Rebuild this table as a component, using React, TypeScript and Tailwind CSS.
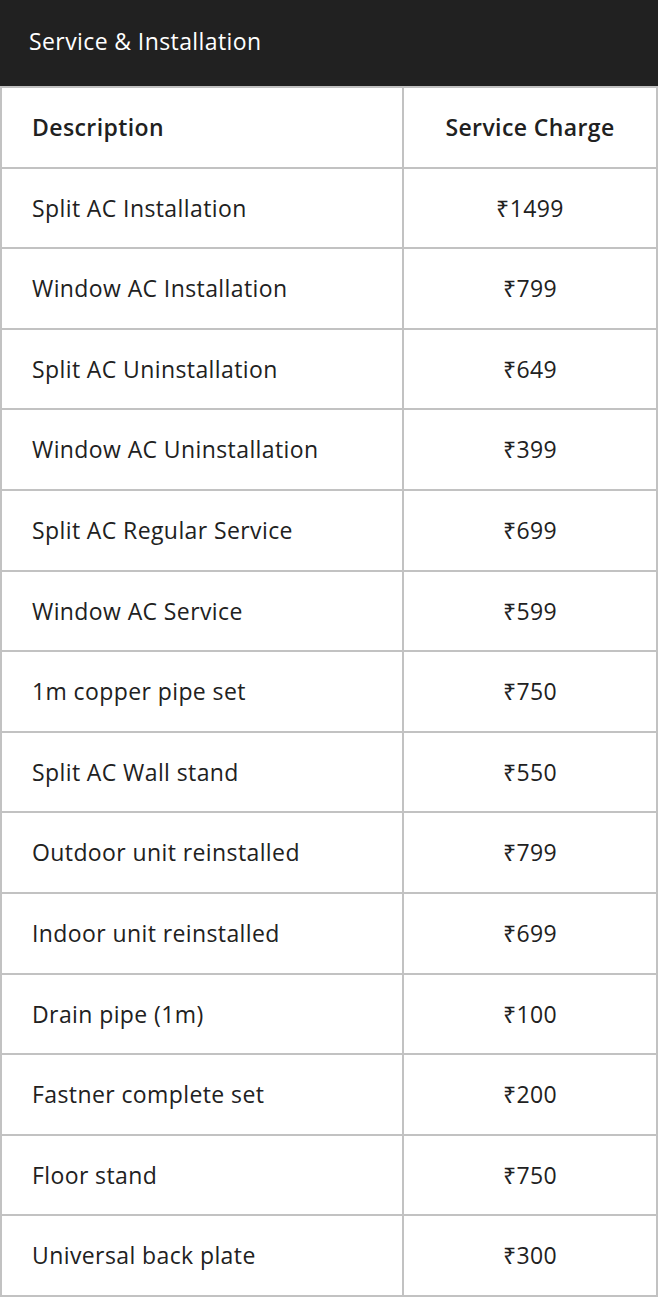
import React from "react";

const rows: [string, string][] = [
  ["Split AC Installation", "₹1499"],
  ["Window AC Installation", "₹799"],
  ["Split AC Uninstallation", "₹649"],
  ["Window AC Uninstallation", "₹399"],
  ["Split AC Regular Service", "₹699"],
  ["Window AC Service", "₹599"],
  ["1m copper pipe set", "₹750"],
  ["Split AC Wall stand", "₹550"],
  ["Outdoor unit reinstalled", "₹799"],
  ["Indoor unit reinstalled", "₹699"],
  ["Drain pipe (1m)", "₹100"],
  ["Fastner complete set", "₹200"],
  ["Floor stand", "₹750"],
  ["Universal back plate", "₹300"],
];

export default function App() {
  return (
    <div
      className="w-[658px] bg-white text-[#212121] tracking-[0.4px]"
      style={{ fontFamily: "'Open Sans', 'Noto Sans', sans-serif" }}
    >
      <div className="h-[86px] bg-[#212121] flex items-center px-[29px] pb-[4px]">
        <span className="text-white text-[23px]">Service &amp; Installation</span>
      </div>
      <div className="border-x-2 border-b-2 border-[#c2c2c2]">
        <div className="flex h-[80.6px] border-t-2 border-[#c2c2c2]">
          <div className="w-[402px] border-r-2 border-[#c2c2c2] flex items-center pl-[30px] text-[23px] font-semibold">
            Description
          </div>
          <div className="flex-1 flex items-center justify-center text-[23px] font-semibold">
            Service Charge
          </div>
        </div>
        {rows.map(([d, p]) => (
          <div key={d} className="flex h-[80.6px] border-t-2 border-[#c2c2c2]">
            <div className="w-[402px] border-r-2 border-[#c2c2c2] flex items-center pl-[30px] text-[23px]">
              {d}
            </div>
            <div className="flex-1 flex items-center justify-center text-[23px]">
              {p}
            </div>
          </div>
        ))}
      </div>
    </div>
  );
}
